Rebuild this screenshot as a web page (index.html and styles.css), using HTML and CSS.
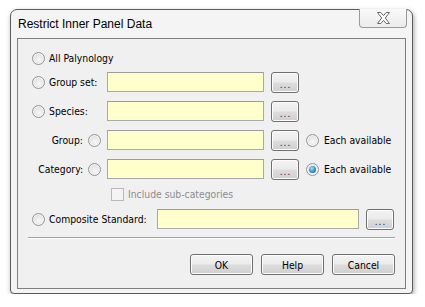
FILE: index.html
```html
<!DOCTYPE html>
<html>
<head>
<meta charset="utf-8">
<link rel="stylesheet" href="styles.css">
</head>
<body>
<div class="window">
  <div class="titlebar">
    <span class="title">Restrict Inner Panel Data</span>
    <div class="close">
      <svg width="15" height="12" viewBox="0 0 15 12"><path d="M1.5 0.5 H4.8 L7.5 3.6 L10.2 0.5 H13.5 L9.3 6 L13.5 11.5 H10.2 L7.5 8.4 L4.8 11.5 H1.5 L5.7 6 Z" fill="#fdfdfd" stroke="#6b6b6b" stroke-width="1" stroke-linejoin="round"/></svg>
    </div>
  </div>
  <div class="client">
    <div class="row top">
      <span class="radio"></span><span class="text">All Palynology</span>
    </div>
    <div class="row field">
      <div class="lead"><span class="radio"></span><span class="text">Group set:</span></div>
      <div class="input"></div>
      <div class="btn dots">...</div>
    </div>
    <div class="row field">
      <div class="lead"><span class="radio"></span><span class="text">Species:</span></div>
      <div class="input"></div>
      <div class="btn dots">...</div>
    </div>
    <div class="row field">
      <div class="lead right"><span class="text">Group:</span><span class="radio"></span></div>
      <div class="input"></div>
      <div class="btn dots">...</div>
      <div class="each"><span class="radio"></span><span class="text">Each available</span></div>
    </div>
    <div class="row field">
      <div class="lead right"><span class="text">Category:</span><span class="radio"></span></div>
      <div class="input"></div>
      <div class="btn dots">...</div>
      <div class="each"><span class="radio on"></span><span class="text">Each available</span></div>
    </div>
    <div class="row sub">
      <span class="check"></span><span class="text disabled">Include sub-categories</span>
    </div>
    <div class="row field">
      <div class="lead wide"><span class="radio"></span><span class="text">Composite Standard:</span></div>
      <div class="input long"></div>
      <div class="btn dots">...</div>
    </div>
    <div class="sep"></div>
    <div class="actions">
      <div class="btn push">OK</div>
      <div class="btn push">Help</div>
      <div class="btn push">Cancel</div>
    </div>
  </div>
</div>
</body>
</html>
```
FILE: styles.css
```css
html, body {
  margin: 0;
  padding: 0;
  background: #ffffff;
}
body {
  font-family: "DejaVu Sans Condensed", "DejaVu Sans", sans-serif;
  font-size: 10.3px;
  color: #000;
}
.window {
  margin: 9px 0 0 10px;
  border: 1px solid #5c5c5c;
  border-radius: 7px 7px 4px 4px;
  background: #f4f4f4;
  box-shadow: 1px 2px 5px rgba(0,0,0,0.35);
  padding: 0 6px 4px 6px;
  box-sizing: border-box;
  width: 403px;
  height: 285px;
  display: flex;
  flex-direction: column;
}
.titlebar {
  height: 28px;
  display: flex;
  align-items: center;
  justify-content: space-between;
}
.title {
  font-family: "Liberation Sans", Arial, sans-serif;
  font-size: 12px;
  padding-left: 1px;
  color: #000;
}
.close {
  align-self: flex-start;
  margin-top: -1px;
  margin-right: -1px;
  width: 46px;
  height: 18px;
  border: 1px solid #9a9a9a;
  border-top: none;
  border-radius: 0 0 4px 4px;
  background: linear-gradient(#fafafa, #ececec);
  display: flex;
  align-items: center;
  justify-content: center;
}
.client {
  flex: 1;
  border: 1px solid #7f7f7f;
  background: #f0f0f0;
  padding: 13px 10px 0 14px;
  display: flex;
  flex-direction: column;
}
.row {
  display: flex;
  align-items: center;
}
.row.top {
  height: 13px;
  margin-bottom: 7px;
}
.row.field {
  height: 21px;
  margin-bottom: 8px;
}
.row.sub {
  height: 13px;
  margin-bottom: 8px;
  padding-left: 79px;
}
.text {
  white-space: nowrap;
  line-height: 13px;
}
.disabled {
  color: #8d8d8d;
}
.radio {
  width: 13px;
  height: 13px;
  box-sizing: border-box;
  border-radius: 50%;
  border: 1px solid #949494;
  background: radial-gradient(circle at 55% 60%, #f8f8f8 0, #e8e8e8 45%, #d2d2d2 100%);
  box-shadow: inset 0 0 0 1px #f6f6f6;
  flex: none;
  margin-right: 4px;
  position: relative;
}
.radio.on::after {
  content: "";
  position: absolute;
  left: 2px;
  top: 2px;
  width: 7px;
  height: 7px;
  border-radius: 50%;
  background: radial-gradient(circle at 40% 35%, #a9e0fb 0, #3f9fd8 45%, #124f86 100%);
}
.check {
  width: 13px;
  height: 13px;
  box-sizing: border-box;
  border: 1px solid #b9b9b9;
  background: #f4f4f4;
  margin-right: 4px;
  flex: none;
}
.lead {
  width: 75px;
  display: flex;
  align-items: center;
  flex: none;
}
.lead.right {
  justify-content: flex-end;
}
.lead.right .text {
  margin-right: 5px;
}
.lead.right .radio {
  margin-right: 6px;
}
.lead.wide {
  width: 125px;
}
.input {
  width: 157px;
  height: 20px;
  box-sizing: border-box;
  border: 1px solid #a9a9a9;
  border-top-color: #9c9c9c;
  background: #ffffcc;
  align-self: flex-start;
  flex: none;
}
.input.long {
  width: 202px;
}
.btn {
  box-sizing: border-box;
  border: 1px solid #707070;
  border-radius: 3px;
  background: linear-gradient(#f3f3f3 0, #ebebeb 48%, #dddddd 52%, #cfcfcf 100%);
  box-shadow: inset 0 0 0 1px #fcfcfc;
  display: flex;
  align-items: center;
  justify-content: center;
  flex: none;
}
.dots {
  width: 28px;
  height: 21px;
  margin-left: 7px;
  color: #1b1466;
  font-family: "Liberation Sans", Arial, sans-serif;
  font-size: 10px;
  letter-spacing: 1px;
  padding: 3px 0 0 1px;
}
.each {
  margin-left: 7px;
  display: flex;
  align-items: center;
}
.each .radio {
  margin-right: 5px;
}
.sep {
  height: 1px;
  background: #a0a0a0;
  border-bottom: 1px solid #ffffff;
  margin: -1px 0 0 -4px;
  width: 367px;
}
.actions {
  margin-top: 15px;
  display: flex;
  justify-content: flex-end;
  gap: 8px;
}
.push {
  width: 63px;
  height: 21px;
}
```
